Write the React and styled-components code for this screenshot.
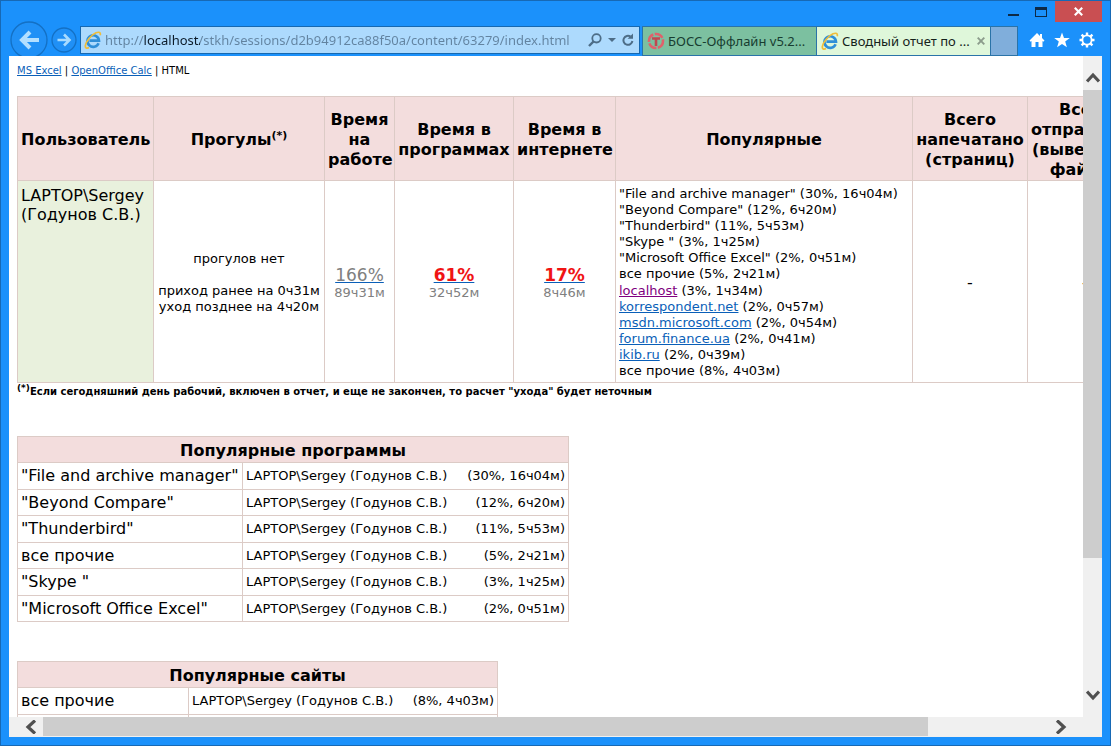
/* IMPORT */
import React from "react";
import styled, { createGlobalStyle } from "styled-components";

const users = [
  {
    name: "LAPTOP\\Sergey (Годунов С.В.)",
    work: { percent: "166%", time: "89ч31м" },
    programs: { percent: "61%", time: "32ч52м" },
    internet: { percent: "17%", time: "8ч46м" },
    popular: [
      { title: '"File and archive manager"', stat: "(30%, 16ч04м)" },
      { title: '"Beyond Compare"', stat: "(12%, 6ч20м)" },
      { title: '"Thunderbird"', stat: "(11%, 5ч53м)" },
      { title: '"Skype "', stat: "(3%, 1ч25м)" },
      { title: '"Microsoft Office Excel"', stat: "(2%, 0ч51м)" },
      { title: "все прочие", stat: "(5%, 2ч21м)" },
      { title: "localhost", stat: "(3%, 1ч34м)", link: true, visited: true },
      { title: "korrespondent.net", stat: "(2%, 0ч57м)", link: true },
      { title: "msdn.microsoft.com", stat: "(2%, 0ч54м)", link: true },
      { title: "forum.finance.ua", stat: "(2%, 0ч41м)", link: true },
      { title: "ikib.ru", stat: "(2%, 0ч39м)", link: true },
      { title: "все прочие", stat: "(8%, 4ч03м)" },
    ],
  },
];

const programs = [
  { title: '"File and archive manager"', stat: "(30%, 16ч04м)" },
  { title: '"Beyond Compare"', stat: "(12%, 6ч20м)" },
  { title: '"Thunderbird"', stat: "(11%, 5ч53м)" },
  { title: "все прочие", stat: "(5%, 2ч21м)" },
  { title: '"Skype "', stat: "(3%, 1ч25м)" },
  { title: '"Microsoft Office Excel"', stat: "(2%, 0ч51м)" },
];

const sites = [
  { title: "все прочие", stat: "(8%, 4ч03м)" },
  { title: "localhost", stat: "(3%, 1ч34м)" },
];

/* ICONS */

const IeIcon = () => (
  <svg width="18" height="18" viewBox="0 0 18 18" fill="none">
    <path d="M14.6 12.2A5.8 5.8 0 1 1 15 9.6H5.4" stroke="#2f8fd8" strokeWidth="2.6" />
    <path d="M5 16.6C2.6 17.8 1 17 1.4 14.5C2 10.5 7 4 12 1.8C15.3 .5 16.9 1.6 16.2 4.3" stroke="#f0bd3a" strokeWidth="1.7" />
  </svg>
);

const BossIcon = () => (
  <svg width="18" height="18" viewBox="0 0 18 18" fill="none">
    <circle cx="9" cy="9" r="7" stroke="#e0616b" strokeWidth="2.6" strokeDasharray="9 1.5" />
    <path d="M5 6.5H13M9 6.5V14" stroke="#c04850" strokeWidth="2.6" />
  </svg>
);

const BackIcon = () => (
  <svg width="38" height="38" viewBox="0 0 38 38" fill="none">
    <circle cx="19" cy="19" r="18" fill="#2090f6" stroke="#1470c4" strokeWidth="1.3" />
    <path d="M29 19H12M20 11L12 19L20 27" stroke="#b4dfff" strokeWidth="4" />
  </svg>
);

const ForwardIcon = () => (
  <svg width="26" height="26" viewBox="0 0 26 26" fill="none">
    <circle cx="13" cy="13" r="12" fill="#2090f6" stroke="#1470c4" strokeWidth="1.3" />
    <path d="M6.5 13H18M13 7.5L18.5 13L13 18.5" stroke="#a9dbff" strokeWidth="2.6" />
  </svg>
);

const SearchIcon = () => (
  <svg width="14" height="14" viewBox="0 0 14 14" fill="none" stroke="#4d6d87">
    <circle cx="8.5" cy="5.3" r="4.2" strokeWidth="1.8" />
    <path d="M5.5 8.5L1 13" strokeWidth="2.4" />
  </svg>
);

const CaretIcon = () => (
  <svg width="8" height="4" viewBox="0 0 8 4">
    <path d="M0 0H8L4 4Z" fill="#4d6d87" />
  </svg>
);

const RefreshIcon = () => (
  <svg width="12" height="14" viewBox="0 0 12 14" fill="none">
    <path d="M8.5 3.6A4.5 4.5 0 1 0 10.4 8" stroke="#4d6d87" strokeWidth="2" />
    <path d="M5.5 5.8H11V.5Z" fill="#4d6d87" />
  </svg>
);

const HomeIcon = () => (
  <svg width="16" height="16" viewBox="0 0 16 16">
    <path d="M8 1L11 4V2H13V6L15.5 8.5L14.3 9.7L13.5 9V15H9.5V10H6.5V15H2.5V9L1.7 9.7L.5 8.5Z" fill="#fff" />
  </svg>
);

const StarIcon = () => (
  <svg width="16" height="16" viewBox="0 0 16 16">
    <path d="M8 .5L10 6H15.8L11.2 9.5L12.9 15.3L8 11.9L3.1 15.3L4.8 9.5L.2 6H6Z" fill="#fff" />
  </svg>
);

const GearIcon = () => (
  <svg width="16" height="16" viewBox="0 0 16 16" fill="none" stroke="#fff">
    <circle cx="8" cy="8" r="4.6" strokeWidth="1.8" />
    <path d="M8 .5V3.5M8 12.5V15.5M.5 8H3.5M12.5 8H15.5M2.6 2.6L4.8 4.8M11.2 11.2L13.4 13.4M2.6 13.4L4.8 11.2M11.2 4.8L13.4 2.6" strokeWidth="2.4" />
  </svg>
);

const MinimizeIcon = () => (
  <svg width="12" height="12" viewBox="0 0 12 12">
    <path d="M1 8H12V10H1Z" fill="#0d2a47" />
  </svg>
);

const MaximizeIcon = () => (
  <svg width="12" height="12" viewBox="0 0 12 12">
    <path d="M0 1H12V11H0ZM1 4V10H11V4Z" fill="#0d2a47" fillRule="evenodd" />
  </svg>
);

const CrossIcon = ({ color, size }) => (
  <svg width={size} height={size} viewBox="0 0 8 8" fill="none">
    <path d="M.7 .7L7.3 7.3M7.3 .7L.7 7.3" stroke={color} strokeWidth="1.9" />
  </svg>
);

const ArrowIcon = ({ d }) => (
  <svg width="14" height="14" viewBox="0 0 14 14" fill="none">
    <path d={d} stroke="#505050" strokeWidth="3.2" />
  </svg>
);

// процент со ссылкой и время под ним
const Ratio = ({ value, alert }) => (
  <StTd $center>
    <StRatioLink href="#" $alert={alert}>{value.percent}</StRatioLink>
    <StTime>{value.time}</StTime>
  </StTd>
);

const Rating = ({ title, rows, first, second }) => (
  <StTable>
    <colgroup>
      <StCol $width={first} />
      <StCol $width={second} />
    </colgroup>
    <thead>
      <StRatingRow><StTh colSpan={2}>{title}</StTh></StRatingRow>
    </thead>
    <tbody>
      {rows.map((row) => (
        <StRatingRow key={row.title}>
          <StTd $large>{row.title}</StTd>
          <StTd>
            <StShare>
              <span>LAPTOP\Sergey (Годунов С.В.)</span>
              <span>{row.stat}</span>
            </StShare>
          </StTd>
        </StRatingRow>
      ))}
    </tbody>
  </StTable>
);

const App = () => {
  return (
    <StWindow>
      <GlobalStyle />
      <StTop>
        <StNav>
          <StIconBtn aria-label="Назад"><BackIcon /></StIconBtn>
          <StIconBtn aria-label="Вперед"><ForwardIcon /></StIconBtn>
        </StNav>
        <StAddress>
          <IeIcon />
          <StUrl
            aria-label="Адрес"
            defaultValue="http://localhost/stkh/sessions/d2b94912ca88f50a/content/63279/index.html"
          />
          <StAddressTools>
            <StIconBtn aria-label="Поиск"><SearchIcon /></StIconBtn>
            <StIconBtn aria-label="Список адресов"><CaretIcon /></StIconBtn>
            <StIconBtn aria-label="Обновить"><RefreshIcon /></StIconBtn>
          </StAddressTools>
        </StAddress>
        <StTabs>
          <StTab>
            <StTabBtn><BossIcon />БОСС-Оффлайн v5.2...</StTabBtn>
          </StTab>
          <StTab $active>
            <StTabBtn><IeIcon />Сводный отчет по ...</StTabBtn>
            <StIconBtn aria-label="Закрыть вкладку"><CrossIcon color="#8c9c8c" size={8} /></StIconBtn>
          </StTab>
          <StNewTab aria-label="Новая вкладка" />
        </StTabs>
        <StRight>
          <StControls>
            <StControl aria-label="Свернуть"><MinimizeIcon /></StControl>
            <StControl aria-label="Развернуть"><MaximizeIcon /></StControl>
            <StCloseBtn aria-label="Закрыть"><CrossIcon color="#fff" size={9} /></StCloseBtn>
          </StControls>
          <StTools>
            <StIconBtn aria-label="Домой"><HomeIcon /></StIconBtn>
            <StIconBtn aria-label="Избранное"><StarIcon /></StIconBtn>
            <StIconBtn aria-label="Сервис"><GearIcon /></StIconBtn>
          </StTools>
        </StRight>
      </StTop>

      <StView>
        <StPage>
          <StFormats>
            <StLink href="#">MS Excel</StLink> | <StLink href="#">OpenOffice Calc</StLink> | HTML
          </StFormats>

          <StTable>
            <colgroup>
              <StCol $width={136} />
              <StCol $width={171} />
              <StCol $width={70} />
              <StCol $width={119} />
              <StCol $width={102} />
              <StCol $width={297} />
              <StCol $width={115} />
              <StCol $width={115} />
            </colgroup>
            <thead>
              <StHeadRow>
                <StTh>Пользователь</StTh>
                <StTh>Прогулы<StSup>(*)</StSup></StTh>
                <StTh>Время<br />на<br />работе</StTh>
                <StTh>Время в<br />программах</StTh>
                <StTh>Время в<br />интернете</StTh>
                <StTh>Популярные</StTh>
                <StTh>Всего<br />напечатано<br />(страниц)</StTh>
                <StTh>Всего<br />отправлено<br />(выведено)<br />файлов</StTh>
              </StHeadRow>
            </thead>
            <tbody>
              {users.map((user) => (
                <StUserRow key={user.name}>
                  <StUserTd>{user.name}</StUserTd>
                  <StTd $center>
                    прогулов нет<br /><br />приход ранее на 0ч31м<br />уход позднее на 4ч20м
                  </StTd>
                  <Ratio value={user.work} />
                  <Ratio value={user.programs} alert />
                  <Ratio value={user.internet} alert />
                  <StTd>
                    <StPopular>
                      {user.popular.map((item, i) => (
                        <div key={i}>
                          {item.link
                            ? <StLink href="#" $visited={item.visited}>{item.title}</StLink>
                            : item.title}{" "}
                          {item.stat}
                        </div>
                      ))}
                    </StPopular>
                  </StTd>
                  <StTd $center $large>-</StTd>
                  <StTd $center $large>-</StTd>
                </StUserRow>
              ))}
            </tbody>
          </StTable>
          <StNote>
            <StSup $small>(*)</StSup>Если сегодняшний день рабочий, включен в отчет, и еще не закончен, то расчет "ухода" будет неточным
          </StNote>

          <Rating title="Популярные программы" rows={programs} first={225} second={326} />
          <StGap />
          <Rating title="Популярные сайты" rows={sites} first={171} second={309} />
        </StPage>

        <StVScroll>
          <StVArrow aria-label="Вверх"><ArrowIcon d="M1 10.5L7 4L13 10.5" /></StVArrow>
          <StVTrack><StThumb /></StVTrack>
          <StVArrow aria-label="Вниз"><ArrowIcon d="M1 3.5L7 10L13 3.5" /></StVArrow>
        </StVScroll>
        <StHScroll>
          <StHArrow aria-label="Влево"><ArrowIcon d="M11 .5L4 7L11 13.5" /></StHArrow>
          <StHTrack><StThumb /></StHTrack>
          <StHArrow aria-label="Вправо"><ArrowIcon d="M3 .5L10 7L3 13.5" /></StHArrow>
        </StHScroll>
        <StCorner />
      </StView>
    </StWindow>
  );
};

/* STYLED-COMPONENTS */

const GlobalStyle = createGlobalStyle`
  * {
    box-sizing: border-box;
  }
  body {
    margin: 0;
    overflow: hidden;
  }
  svg {
    display: block;
    flex: none;
  }
  button {
    padding: 0;
    border: none;
    background: transparent;
    font: inherit;
    color: inherit;
  }
`;

const StWindow = styled.div`
  display: flex;
  flex-direction: column;
  height: 100vh;
  padding: 0 8px 8px;
  background: #1b91fb;
  border: 1px solid #1769b5;
  font-family: "DejaVu Sans", Verdana, sans-serif;
  color: #000;
`;

const StTop = styled.header`
  display: flex;
  height: 55px;
  font-family: "Noto Sans", "Open Sans", sans-serif;
  font-size: 13px;
`;

const StNav = styled.div`
  display: flex;
  align-items: center;
  gap: 3px;
  width: 71px;
  padding: 22px 0 0 1px;
`;

const StIconBtn = styled.button`
  display: flex;
  align-items: center;
  justify-content: center;
`;

const StAddress = styled.div`
  display: flex;
  flex: 1;
  align-items: center;
  gap: 3px;
  min-width: 0;
  height: 28px;
  margin: 25px 2px 0 0;
  padding: 0 5px 0 3px;
  background: #addafd;
  border: 1px solid #1668b0;
`;

const StAddressTools = styled.div`
  display: flex;
  align-items: center;
  gap: 6px;
`;

/* имя хоста в адресе темнее остального текста */
const StUrl = styled.input`
  flex: 1;
  min-width: 0;
  padding: 0;
  border: none;
  outline: none;
  font-family: "Noto Sans", "Open Sans", sans-serif;
  font-size: 13px;
  color: transparent;
  background: linear-gradient(to right, #6283a0 39px, #0b1a28 39px, #0b1a28 95px, #6283a0 95px);
  -webkit-background-clip: text;
  background-clip: text;
`;

const StTabs = styled.div`
  display: flex;
  height: 30px;
  margin-top: 25px;
  border: 1px solid #2a73a8;
`;

const StTab = styled.div`
  display: flex;
  align-items: center;
  width: 174px;
  padding: 0 5px 0 4px;
  background: ${({ $active }) => ($active ? "#dff7da" : "#7cc0a0")};
  color: ${({ $active }) => ($active ? "#14221a" : "#173d30")};
  border-right: 1px solid #2a73a8;
`;

const StTabBtn = styled.button`
  display: flex;
  flex: 1;
  align-items: center;
  gap: 3px;
  min-width: 0;
  white-space: nowrap;
`;

const StNewTab = styled.button`
  width: 26px;
  background: #80aedb;
`;

const StRight = styled.div`
  width: 84px;
`;

const StControls = styled.div`
  display: flex;
  justify-content: flex-end;
  height: 22px;
`;

const StControl = styled.button`
  display: flex;
  flex: none;
  align-items: center;
  justify-content: center;
  width: 28px;
`;

const StCloseBtn = styled(StControl)`
  width: 47px;
  height: 21px;
  background: #c94f52;
`;

const StTools = styled.div`
  display: flex;
  gap: 9px;
  padding: 9px 0 0 11px;
`;

const StView = styled.main`
  display: grid;
  flex: 1;
  grid-template-columns: minmax(0, 1fr) 19px;
  grid-template-rows: minmax(0, 1fr) 20px;
  min-height: 0;
  background: #fff;
`;

const StPage = styled.div`
  padding: 8px 8px 0;
  overflow: hidden;
`;

const StFormats = styled.div`
  height: 32px;
  font-size: 10px;
  line-height: 14px;
`;

const StLink = styled.a`
  color: ${({ $visited }) => ($visited ? "#800080" : "#0a5fb8")};
  text-decoration: underline;
`;

const StTable = styled.table`
  table-layout: fixed;
  width: 0;
  border-collapse: collapse;
`;

const StCol = styled.col`
  width: ${({ $width }) => $width}px;
`;

const StHeadRow = styled.tr`
  height: 84px;
`;

const StRatingRow = styled.tr`
  height: 26px;
  tbody &:nth-child(odd) {
    height: 27px;
  }
`;

const StTh = styled.th`
  padding: 2px 3px 0;
  background: #f3dddd;
  border: 1px solid #dccbc6;
  font-size: 16px;
  line-height: 20px;
  white-space: nowrap;
`;

const StTd = styled.td`
  padding: 0 3px;
  border: 1px solid #dccbc6;
  font-size: ${({ $large }) => ($large ? 16 : 13)}px;
  line-height: ${({ $large }) => ($large ? 20 : 16)}px;
  text-align: ${({ $center }) => ($center ? "center" : "left")};
  white-space: nowrap;
`;

const StUserRow = styled.tr`
  height: 202px;
  ${StTd} {
    padding-top: 2px;
  }
`;

const StUserTd = styled.td`
  padding: 5px 3px 0;
  background: #e9f1dd;
  border: 1px solid #dccbc6;
  font-size: 16px;
  line-height: 19px;
  vertical-align: top;
`;

const StPopular = styled.div`
  display: flex;
  flex-direction: column;
  justify-content: space-between;
  height: 194px;
`;

const StRatioLink = styled.a`
  font-size: 17px;
  line-height: 20px;
  font-weight: ${({ $alert }) => ($alert ? "bold" : "normal")};
  color: ${({ $alert }) => ($alert ? "#f01414" : "#808080")};
  text-decoration: underline #0a5fb8;
`;

const StTime = styled.div`
  color: #808080;
`;

const StSup = styled.sup`
  font-size: ${({ $small }) => ($small ? 9 : 11)}px;
  line-height: 0;
`;

const StNote = styled.div`
  height: 53px;
  padding-top: 1px;
  font-size: 10px;
  line-height: 16px;
  font-weight: bold;
  white-space: nowrap;
`;

const StShare = styled.div`
  display: flex;
  justify-content: space-between;
`;

const StGap = styled.div`
  height: 39px;
`;

const StVScroll = styled.div`
  display: flex;
  flex-direction: column;
  background: #f0f0f0;
`;

const StHScroll = styled.div`
  display: flex;
  background: #f0f0f0;
`;

const StVArrow = styled.button`
  display: flex;
  align-items: center;
  justify-content: center;
  height: 34px;
  padding-top: 10px;
  &:last-child {
    padding: 0 0 10px;
  }
`;

const StHArrow = styled.button`
  display: flex;
  align-items: center;
  justify-content: center;
  width: 34px;
  padding-left: 10px;
  &:last-child {
    padding: 0 10px 0 0;
  }
`;

const StThumb = styled.div`
  background: #cdcdcd;
`;

const StVTrack = styled.div`
  flex: 1;
  ${StThumb} {
    height: 79%;
  }
`;

const StHTrack = styled.div`
  flex: 1;
  ${StThumb} {
    width: 88%;
    height: 19px;
  }
`;

const StCorner = styled.div`
  background: #f0f0f0;
`;

export default App;
